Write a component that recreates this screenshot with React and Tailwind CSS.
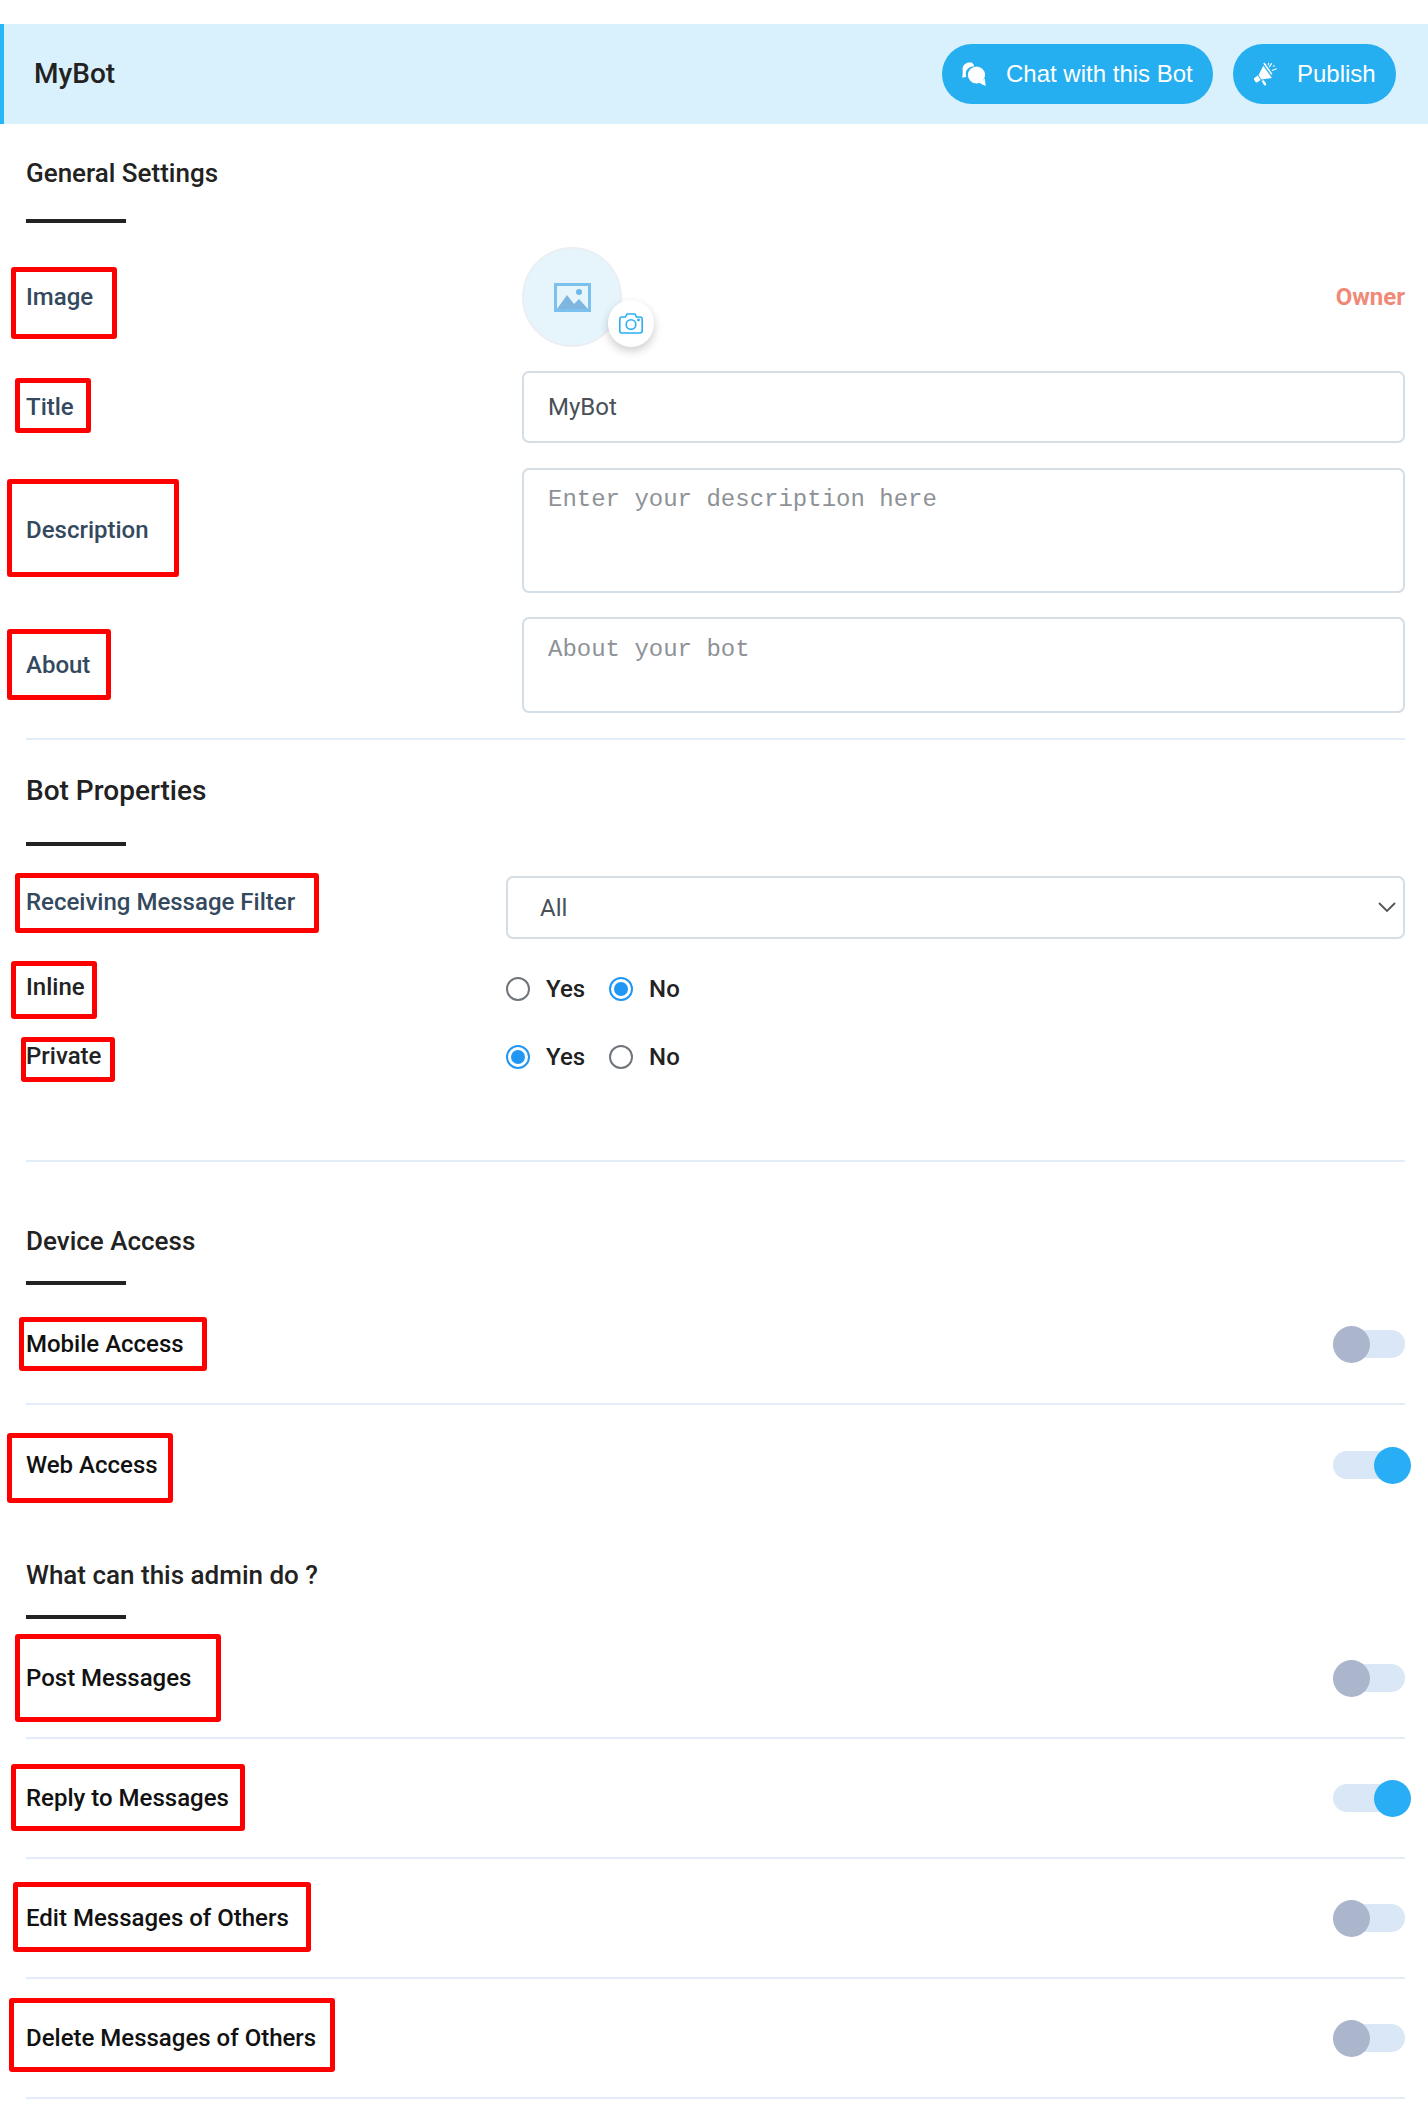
import React from 'react';

const roboto = 'font-["Roboto",sans-serif]';

const ChatIcon = () => (
    <svg width="24" height="24" viewBox="0 0 24 24" fill="#fff">
        <path d="M8.5 0.3C4 0.3 0.4 3.3 0.6 7.4c.1 1.9.2 4.5-.4 8.4 1.3-.5 2.7-.8 4.2-.9-.4-1-.6-2-.6-3 0-4.5 3.6-7.6 8.4-7.7-.7-2.4-2.2-3.9-4.2-3.9z" />
        <circle cx="14.5" cy="13" r="8.6" />
        <path d="M17 20.5c2 1.6 4.400 2.600 6.800 3.200-.6-2.300-.8-4.500-.8-7z" />
    </svg>
);

const MegaphoneIcon = () => (
    <svg width="24" height="24" viewBox="0 0 24 24" fill="#fff">
        <path d="M9.2 1.400l1.300-.9 8 11.400-1.300.9z" />
        <path d="M9.300 3.700L4.500 13.300l3 4.300 10.400-1.700z" />
        <path d="M0.300 16l3.400-2.400 3 4.300-3.400 2.400c-.6.4-1.300.3-1.700-.3L0 17.700c-.4-.6-.3-1.300.3-1.700z" />
        <path d="M7.500 18.700l2.300-.4 2.200 3.300c.4.600.2 1.300-.3 1.700-.6.400-1.300.2-1.700-.3z" />
        <path d="M14.700 4.700l2.600-3.800 1 .7-2.600 3.800zM17.700 8l4.800-1.800.4 1.100-4.800 1.800zM14.200.7l1.200.3-.6 2.300-1.200-.3zM20 3l1 .8-1.200 1.300-.9-.8z" />
    </svg>
);

const PictureIcon = () => (
    <svg width="37" height="29" viewBox="0 0 37 29">
        <path fill="#7cc0ee" fillRule="evenodd" d="M0 0h37v29H0zM3 3v23h31V3z" />
        <circle cx="25" cy="9" r="3" fill="#6fb7ea" />
        <path fill="#7fb6e0" d="M3 26l10-14 7 9 5-5 9 10z" />
    </svg>
);

const CameraIcon = () => (
    <svg width="24" height="21" viewBox="0 0 24 21" fill="none" stroke="#29aef2" strokeWidth="1.600">
        <path d="M3 4h3.500l1.500-3h8l1.500 3H21c1.200 0 2.200 1 2.200 2.200v11.600c0 1.200-1 2.200-2.200 2.200H3c-1.200 0-2.200-1-2.200-2.200V6.200C.8 5 1.800 4 3 4z" />
        <circle cx="12" cy="11.500" r="4.800" />
        <circle cx="19.500" cy="7" r="0.600" fill="#29aef2" />
    </svg>
);

const Chevron = () => (
    <svg width="18" height="11" viewBox="0 0 18 11" fill="none" stroke="#555" strokeWidth="1.800">
        <path d="M1 1l8 8 8-8" />
    </svg>
);

// Red annotation frame sitting over a label
const Marked = ({ box, className, children }) => (
    <span className={`relative inline-block leading-[30px] whitespace-nowrap ${className}`}>
        {children}
        <span className={`absolute border-[5px] border-[#ff0000] rounded-[3px] ${box}`} />
    </span>
);

const Heading = ({ title, className, textClass = 'text-[26px]' }) => (
    <div>
        <h3 className={`${textClass} font-medium text-[#222222] leading-[30px] ${className}`}>{title}</h3>
    </div>
);

const Rule = ({ className }) => <div className={`w-[100px] h-[4px] bg-[#222222] ${className}`} />;

const Divider = () => <div className="h-[2px] bg-[#e3edf9]" />;

const Toggle = ({ on }) => (
    <div className="relative w-[72px] h-[28px] rounded-full bg-[#dae7f6]">
        <div
            className={`absolute top-[-4.5px] w-[37px] h-[37px] rounded-full ${
                on ? 'left-[41px] bg-[#29aef6]' : 'left-0 bg-[#abb6cd]'
            }`}
        />
    </div>
);

const Radio = ({ label, checked }) => (
    <label className="flex items-center gap-[16px]">
        <span
            className={`w-[24px] h-[24px] rounded-full border-2 flex items-center justify-center ${
                checked ? 'border-[#2196f3]' : 'border-[#6f757b]'
            }`}
        >
            {checked && <span className="w-[14px] h-[14px] rounded-full bg-[#2196f3]" />}
        </span>
        <span className="text-[24px] font-medium text-[#222222] leading-[30px]">{label}</span>
    </label>
);

const SwitchRow = ({ height, on, box, label }) => (
    <div className={`flex items-center justify-between ${height}`}>
        <Marked box={box} className="text-[24px] font-medium text-[#111111]">{label}</Marked>
        <Toggle on={on} />
    </div>
);

const labelBlue = 'text-[24px] font-medium text-[#34495e]';
const fieldBorder = 'border-2 border-[#d5dde5] rounded-[7px]';
const placeholder = 'placeholder:text-[#8e9297] font-["Liberation_Mono",monospace] text-[24px] leading-[28px] text-[#495057]';

export default function App() {
    return (
        <div className={`${roboto} bg-white min-h-[2128px] pt-[24px] overflow-hidden`}>
            <header className="h-[100px] bg-[#d9f1fd] border-l-[4px] border-[#29b6f6] flex items-center justify-between pl-[30px] pr-[32px]">
                <h1 className="text-[28px] font-medium text-[#222222]">MyBot</h1>
                <div className={`flex gap-[20px] font-["Liberation_Sans",sans-serif] text-[24px] text-white`}>
                    <button className="h-[60px] w-[271px] rounded-full bg-[#25aef0] flex items-center pl-[20px] gap-[20px]">
                        <ChatIcon />
                        Chat with this Bot
                    </button>
                    <button className="h-[60px] w-[163px] rounded-full bg-[#25aef0] flex items-center pl-[21px] gap-[19px]">
                        <MegaphoneIcon />
                        Publish
                    </button>
                </div>
            </header>

            <main className="pl-[26px] pr-[23px]">
                <Heading title="General Settings" className="mt-[34px]" />
                <Rule className="mt-[31px]" />

                <div className="mt-[24px] flex items-center h-[100px]">
                    <div className="w-[496px]">
                        <Marked box="-left-[15px] -top-[15px] w-[106px] h-[72px]" className={labelBlue}>Image</Marked>
                    </div>
                    <div className="relative w-[100px] h-[100px] rounded-full bg-[#e6f4fc] border-2 border-[#ebeff3] flex items-center justify-center">
                        <PictureIcon />
                        <div className="absolute left-[84px] top-[51px] w-[46px] h-[47px] rounded-full bg-white shadow-[0_4px_10px_rgba(0,0,0,0.2)] flex items-center justify-center">
                            <CameraIcon />
                        </div>
                    </div>
                    <span className="ml-auto text-[24px] font-bold text-[#ef8a78]">Owner</span>
                </div>

                <div className="mt-[24px] flex items-center">
                    <div className="w-[496px] shrink-0">
                        <Marked box="-left-[11px] -top-[14px] w-[76px] h-[55px]" className={labelBlue}>Title</Marked>
                    </div>
                    <input
                        readOnly
                        value="MyBot"
                        className={`w-full h-[72px] px-[24px] text-[24px] text-[#495057] ${fieldBorder}`}
                    />
                </div>

                <div className="mt-[25px] flex items-center">
                    <div className="w-[496px] shrink-0 -mt-[2px]">
                        <Marked box="-left-[19px] -top-[36px] w-[172px] h-[98px]" className={labelBlue}>Description</Marked>
                    </div>
                    <textarea
                        readOnly
                        placeholder="Enter your description here"
                        className={`w-full h-[125px] px-[24px] pt-[16px] resize-none ${fieldBorder} ${placeholder}`}
                    />
                </div>

                <div className="mt-[24px] flex items-center">
                    <div className="w-[496px] shrink-0">
                        <Marked box="-left-[19px] -top-[21px] w-[104px] h-[71px]" className={labelBlue}>About</Marked>
                    </div>
                    <textarea
                        readOnly
                        placeholder="About your bot"
                        className={`w-full h-[96px] px-[24px] pt-[17px] resize-none ${fieldBorder} ${placeholder}`}
                    />
                </div>

                <div className="mt-[25px]"><Divider /></div>

                <Heading title="Bot Properties" className="mt-[36px]" textClass="text-[28px]" />
                <Rule className="mt-[36px]" />

                <div className="mt-[30px] flex items-start">
                    <div className="w-[480px] shrink-0 pt-[11px]">
                        <Marked box="-left-[11px] -top-[14px] w-[304px] h-[60px]" className={labelBlue}>Receiving Message Filter</Marked>
                    </div>
                    <div className={`w-full h-[63px] pl-[32px] pr-[7px] flex items-center justify-between text-[24px] text-[#495057] ${fieldBorder}`}>
                        All
                        <Chevron />
                    </div>
                </div>

                <div className="mt-[30px] flex items-center h-[40px]">
                    <div className="w-[480px] shrink-0 -mt-[4px]">
                        <Marked box="-left-[15px] -top-[11px] w-[86px] h-[58px]" className="text-[24px] font-medium text-[#222222]">Inline</Marked>
                    </div>
                    <div className="flex gap-[24px]">
                        <Radio label="Yes" />
                        <Radio label="No" checked />
                    </div>
                </div>

                <div className="mt-[28px] flex items-center h-[40px]">
                    <div className="w-[480px] shrink-0 -mt-[2px]">
                        <Marked box="-left-[5px] -top-[4px] w-[94px] h-[45px]" className="text-[24px] font-medium text-[#222222]">Private</Marked>
                    </div>
                    <div className="flex gap-[24px]">
                        <Radio label="Yes" checked />
                        <Radio label="No" />
                    </div>
                </div>

                <div className="mt-[83px]"><Divider /></div>

                <Heading title="Device Access" className="mt-[64px]" />
                <Rule className="mt-[25px]" />
                <SwitchRow height="h-[118px]" label="Mobile Access" box="-left-[7px] -top-[12px] w-[188px] h-[54px]" />
                <Divider />
                <SwitchRow height="h-[120px]" on label="Web Access" box="-left-[19px] -top-[17px] w-[166px] h-[70px]" />

                <Heading title="What can this admin do ?" className="mt-[35px]" />
                <Rule className="mt-[25px]" />
                <SwitchRow height="h-[118px]" label="Post Messages" box="-left-[11px] -top-[29px] w-[206px] h-[88px]" />
                <Divider />
                <SwitchRow height="h-[118px]" on label="Reply to Messages" box="-left-[15px] -top-[19px] w-[234px] h-[67px]" />
                <Divider />
                <SwitchRow height="h-[118px]" label="Edit Messages of Others" box="-left-[13px] -top-[21px] w-[298px] h-[70px]" />
                <Divider />
                <SwitchRow height="h-[118px]" label="Delete Messages of Others" box="-left-[17px] -top-[25px] w-[326px] h-[74px]" />
                <Divider />
            </main>
        </div>
    );
}
